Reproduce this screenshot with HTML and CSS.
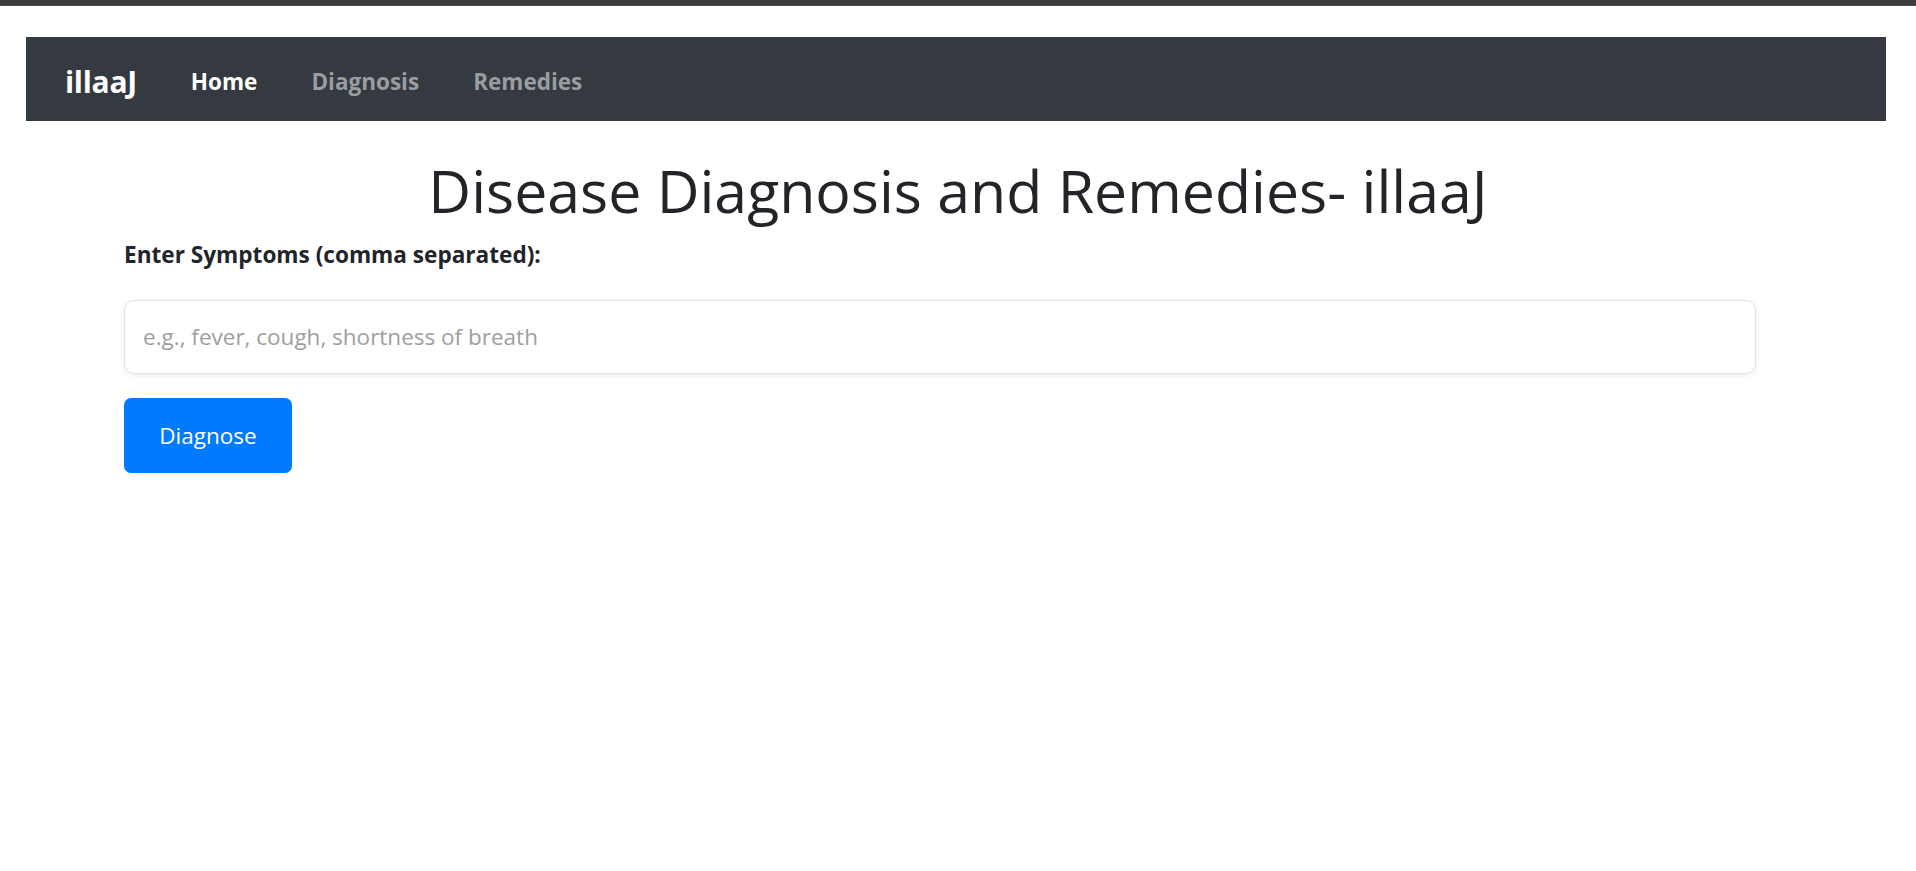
FILE: index.html
```html
<!DOCTYPE html>
<html lang="en">
<head>
<meta charset="utf-8">
<title>illaaJ - Disease Diagnosis and Remedies</title>
<link rel="stylesheet" href="styles.css">
</head>
<body>
<div class="topbar"></div>
<nav class="navbar">
  <a class="brand" href="#">illaaJ</a>
  <a class="nav-link active" href="#">Home</a>
  <a class="nav-link" href="#">Diagnosis</a>
  <a class="nav-link" href="#">Remedies</a>
</nav>
<main class="content">
  <h1 class="title">Disease Diagnosis and Remedies- illaaJ</h1>
  <form class="form">
    <label class="label" for="symptoms">Enter Symptoms (comma separated):</label>
    <input class="input" id="symptoms" type="text" placeholder="e.g., fever, cough, shortness of breath">
    <button class="btn" type="button">Diagnose</button>
  </form>
</main>
</body>
</html>
```

FILE: styles.css
```css
html, body {
  margin: 0;
  padding: 0;
  background: #ffffff;
}
body {
  font-family: "Open Sans", "Noto Sans", Arial, sans-serif;
  color: #212529;
}
.topbar {
  height: 5px;
  background: #3c3c3c;
  border-bottom: 1px solid #4c4c4c;
}
.navbar {
  box-sizing: border-box;
  margin: 31px 30px 0 26px;
  height: 84px;
  background: #343a40;
  display: flex;
  align-items: center;
  padding: 4px 0 0 39px;
  gap: 54px;
}
.brand {
  color: #ffffff;
  font-weight: 700;
  font-size: 30px;
  text-decoration: none;
  letter-spacing: -0.3px;
}
.nav-link {
  color: #9a9da0;
  font-weight: 700;
  font-size: 22.5px;
  text-decoration: none;
}
.nav-link.active {
  color: #ffffff;
}
.content {
  padding: 0 160px 0 124px;
}
.title {
  margin: 34px 0 12px 0;
  text-align: center;
  font-size: 59px;
  line-height: 1.2;
  font-weight: 400;
  color: #212529;
  padding-left: 36px;
}
.form {
  display: flex;
  flex-direction: column;
  align-items: flex-start;
}
.label {
  font-size: 22.6px;
  line-height: 33px;
  font-weight: 700;
  margin: 0 0 29px 0;
  color: #212529;
}
.input {
  box-sizing: border-box;
  width: 100%;
  height: 74px;
  border: 1.5px solid #e3e3e3;
  border-radius: 10px;
  padding: 0 18px;
  font-family: inherit;
  font-size: 22.5px;
  color: #495057;
  box-shadow: 0 2px 6px rgba(0, 0, 0, 0.08);
  outline: none;
}
.input::placeholder {
  color: #9e9e9e;
}
.btn {
  margin-top: 24px;
  box-sizing: border-box;
  width: 168px;
  height: 75px;
  background: #007bff;
  border: none;
  border-radius: 7px;
  color: #ffffff;
  font-family: inherit;
  font-size: 22.5px;
  cursor: pointer;
}
```
